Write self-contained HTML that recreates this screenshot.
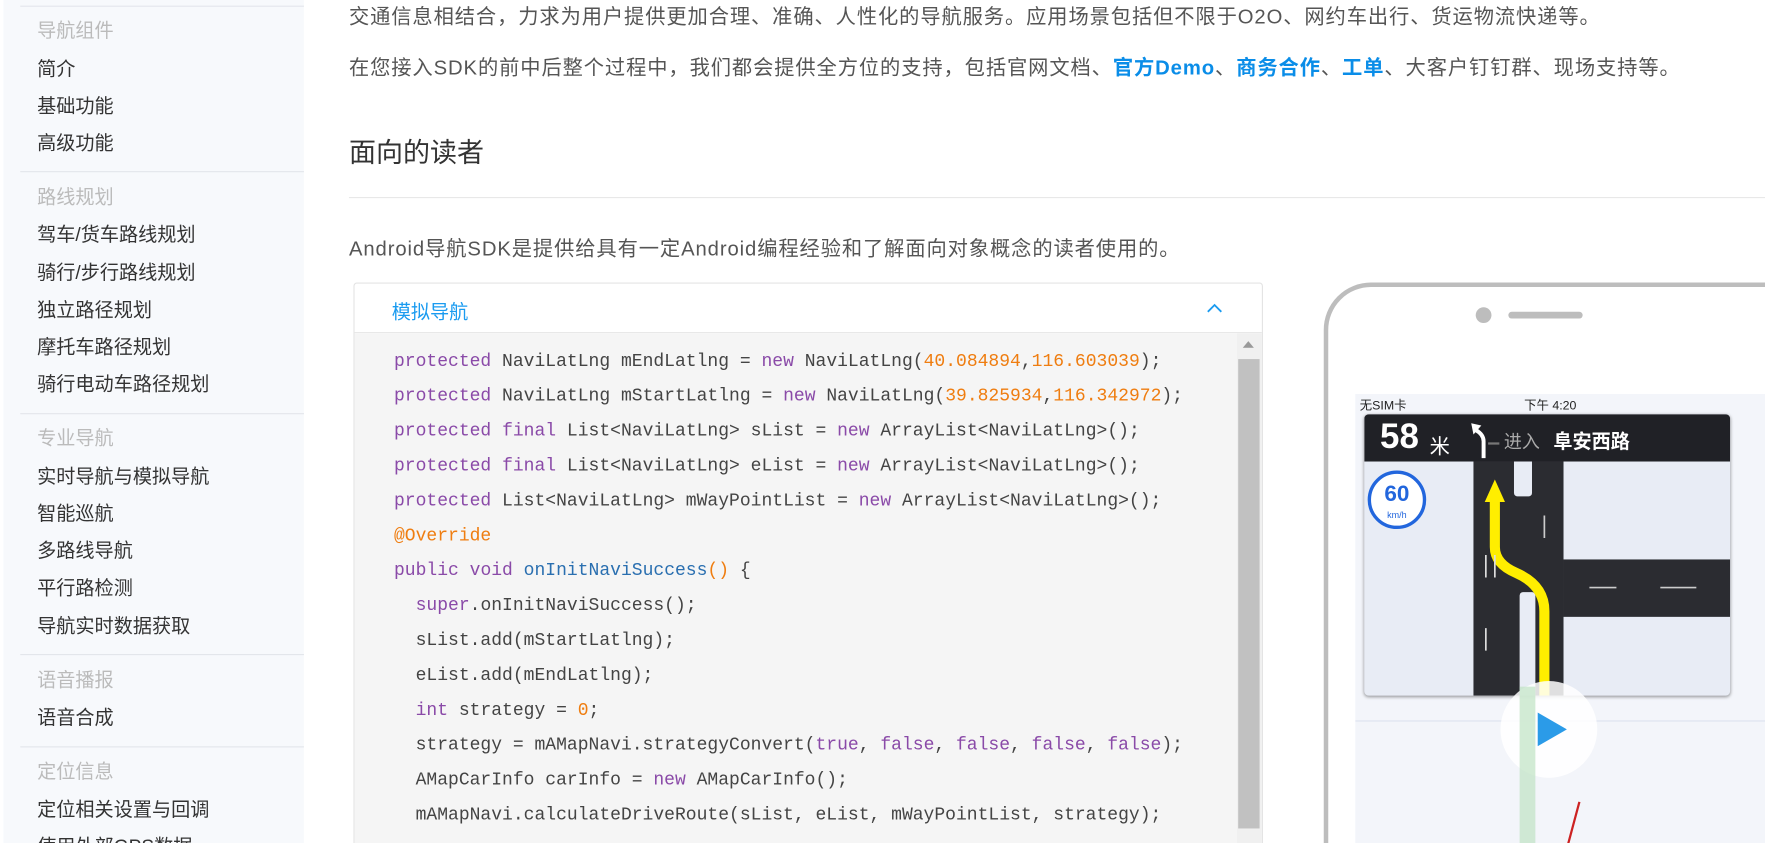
<!DOCTYPE html>
<html><head><meta charset="utf-8"><style>
*{margin:0;padding:0;box-sizing:border-box}
body{width:1765px;height:843px;overflow:hidden;background:#fff;font-family:"Liberation Sans","Noto Sans CJK SC",sans-serif;position:relative}
.wrap{position:absolute;left:0;top:0;width:1568px;height:749px;transform:scale(1.12564);transform-origin:0 0;overflow:hidden}
.side{position:absolute;left:3px;top:0;width:267px;height:843px;background:#f7f9fc}
.side div{position:absolute;left:30px;font-size:17px;color:#333;white-space:nowrap;line-height:20px}
.side div.h{color:#bbb}
.side hr{position:absolute;left:15px;border:0;border-top:1px solid #e3e6eb;width:252px}
.t{position:absolute;left:310px;font-size:18px;letter-spacing:0.8px;color:#555;white-space:nowrap;line-height:20px}
.t b{color:#0a8de8}
.code{position:absolute;left:314px;top:251px;width:808px;height:600px;border:1px solid #e4e4e4;border-radius:3px;background:#fff}
.code .hd{height:44px;border-bottom:1px solid #e6e6e6;color:#1a9bf0;font-size:17px;padding:11px 0 0 33px}
.code .bd{position:absolute;top:44px;left:0;right:0;bottom:0;background:#f5f5f5}
.ln{position:absolute;left:35px;font-family:"Liberation Mono",monospace;font-size:16px;color:#444;white-space:pre;line-height:20px}
.k{color:#8a4aa8}.n{color:#ef7d10}.m{color:#2a6fb0}
</style></head><body><div class="wrap">
<div class="side">
<hr style="top:5px">
<div class="h" style="top:18px">导航组件</div>
<div style="top:52px">简介</div>
<div style="top:85px">基础功能</div>
<div style="top:118px">高级功能</div>
<hr style="top:152px">
<div class="h" style="top:166px">路线规划</div>
<div style="top:199px">驾车/货车路线规划</div>
<div style="top:233px">骑行/步行路线规划</div>
<div style="top:266px">独立路径规划</div>
<div style="top:299px">摩托车路径规划</div>
<div style="top:332px">骑行电动车路径规划</div>
<hr style="top:367px">
<div class="h" style="top:380px">专业导航</div>
<div style="top:414px">实时导航与模拟导航</div>
<div style="top:447px">智能巡航</div>
<div style="top:480px">多路线导航</div>
<div style="top:513px">平行路检测</div>
<div style="top:547px">导航实时数据获取</div>
<hr style="top:581px">
<div class="h" style="top:595px">语音播报</div>
<div style="top:628px">语音合成</div>
<hr style="top:663px">
<div class="h" style="top:676px">定位信息</div>
<div style="top:710px">定位相关设置与回调</div>
<div style="top:743px">使用外部GPS数据</div>
</div>

<div class="t" style="top:5px">交通信息相结合，力求为用户提供更加合理、准确、人性化的导航服务。应用场景包括但不限于O2O、网约车出行、货运物流快递等。</div>
<div class="t" style="top:50px">在您接入SDK的前中后整个过程中，我们都会提供全方位的支持，包括官网文档、<b>官方Demo</b>、<b>商务合作</b>、<b>工单</b>、大客户钉钉群、现场支持等。</div>
<div class="t" style="top:123px;font-size:24px;letter-spacing:0;color:#333;line-height:28px">面向的读者</div>
<div style="position:absolute;left:310px;top:175px;width:1455px;border-top:1px solid #e8e8e8"></div>
<div class="t" style="top:211px">Android导航SDK是提供给具有一定Android编程经验和了解面向对象概念的读者使用的。</div>

<div class="code">
<div class="hd">模拟导航</div>
<svg style="position:absolute;left:757px;top:17px" width="14" height="10"><path d="M1 8 L7 2 L13 8" stroke="#1a9bf0" stroke-width="1.6" fill="none"/></svg>
<div class="bd">
<div style="position:absolute;right:0;top:0;width:22px;bottom:0;background:#f0f0f0"></div>
<svg style="position:absolute;right:7px;top:7px" width="10" height="6"><path d="M0 6L5 0L10 6Z" fill="#999"/></svg>
<div style="position:absolute;right:2px;top:23px;width:19px;height:417px;background:#c1c1c1"></div>
<div class="ln" style="top:15px"><span class="k">protected</span> NaviLatLng mEndLatlng = <span class="k">new</span> NaviLatLng(<span class="n">40.084894</span>,<span class="n">116.603039</span>);</div>
<div class="ln" style="top:46px"><span class="k">protected</span> NaviLatLng mStartLatlng = <span class="k">new</span> NaviLatLng(<span class="n">39.825934</span>,<span class="n">116.342972</span>);</div>
<div class="ln" style="top:77px"><span class="k">protected</span> <span class="k">final</span> List&lt;NaviLatLng&gt; sList = <span class="k">new</span> ArrayList&lt;NaviLatLng&gt;();</div>
<div class="ln" style="top:108px"><span class="k">protected</span> <span class="k">final</span> List&lt;NaviLatLng&gt; eList = <span class="k">new</span> ArrayList&lt;NaviLatLng&gt;();</div>
<div class="ln" style="top:139px"><span class="k">protected</span> List&lt;NaviLatLng&gt; mWayPointList = <span class="k">new</span> ArrayList&lt;NaviLatLng&gt;();</div>
<div class="ln" style="top:170px"><span class="n">@Override</span></div>
<div class="ln" style="top:201px"><span class="k">public</span> <span class="k">void</span> <span class="m">onInitNaviSuccess</span><span class="n">()</span> {</div>
<div class="ln" style="top:232px">  <span class="k">super</span>.onInitNaviSuccess();</div>
<div class="ln" style="top:263px">  sList.add(mStartLatlng);</div>
<div class="ln" style="top:294px">  eList.add(mEndLatlng);</div>
<div class="ln" style="top:325px">  <span class="k">int</span> strategy = <span class="n">0</span>;</div>
<div class="ln" style="top:356px">  strategy = mAMapNavi.strategyConvert(<span class="k">true</span>, <span class="k">false</span>, <span class="k">false</span>, <span class="k">false</span>, <span class="k">false</span>);</div>
<div class="ln" style="top:387px">  AMapCarInfo carInfo = <span class="k">new</span> AMapCarInfo();</div>
<div class="ln" style="top:418px">  mAMapNavi.calculateDriveRoute(sList, eList, mWayPointList, strategy);</div>
</div>
</div>

<!-- phone -->
<div style="position:absolute;left:1176px;top:251px;width:700px;height:700px;border:4px solid #bdbdbd;border-radius:42px;background:#fff"></div>
<div style="position:absolute;left:1311px;top:273px;width:14px;height:14px;border-radius:50%;background:#bdbdbd"></div>
<div style="position:absolute;left:1340px;top:277px;width:66px;height:6px;border-radius:3px;background:#bdbdbd"></div>
<div style="position:absolute;left:1204px;top:350px;width:380px;height:500px;background:#f3f5fa;overflow:hidden">
 <div style="position:absolute;left:4px;top:2px;font-size:11px;color:#222">无SIM卡</div>
 <div style="position:absolute;left:150px;top:2px;font-size:11px;color:#222">下午 4:20</div>
 <div style="position:absolute;left:180px;top:360px;width:2px;height:140px;background:#c22;transform:rotate(15deg)"></div>
 <div style="position:absolute;left:0;top:290px;width:380px;height:1px;background:#dde3ef"></div>
</div>
<div style="position:absolute;left:1212px;top:368px;width:325px;height:250px;border-radius:4px;background:#e8ecf5;overflow:hidden;box-shadow:0 1px 3px rgba(0,0,0,.4)">
 <div style="position:absolute;left:0;top:0;width:325px;height:42px;background:#202126"></div>
 <div style="position:absolute;left:14px;top:2px;font-size:31px;color:#fff;font-weight:bold">58</div>
 <div style="position:absolute;left:58px;top:15px;font-size:18px;color:#fff">米</div>
 <svg style="position:absolute;left:94px;top:6px" width="28" height="34"><path d="M12 33 V18 Q12 12 5 8" stroke="#fff" stroke-width="3.5" fill="none"/><path d="M1 2 L10 4 L3 12Z" fill="#fff"/><path d="M16 20 H26" stroke="#777" stroke-width="2"/></svg>
 <div style="position:absolute;left:124px;top:11px;font-size:16px;color:#aaa">进入</div>
 <div style="position:absolute;left:168px;top:10px;font-size:17px;color:#fff;font-weight:bold">阜安西路</div>
 <div style="position:absolute;left:97px;top:42px;width:80px;height:208px;background:#2b2c31"></div>
 <div style="position:absolute;left:177px;top:129px;width:148px;height:51px;background:#2b2c31"></div>
 <div style="position:absolute;left:133px;top:42px;width:16px;height:31px;background:#e8ecf5;border-radius:0 0 3px 3px"></div>
 <div style="position:absolute;left:138px;top:158px;width:14px;height:92px;background:#e8ecf5;border-radius:3px 3px 0 0"></div>
 <svg style="position:absolute;left:0;top:0" width="325" height="250"><path d="M116 75 V118 Q116 133 135 141 Q160 152 160 175 V250" stroke="#ffee00" stroke-width="9" fill="none"/><path d="M107 78 L116 58 L125 78Z" fill="#ffee00"/><path d="M160 110 V90 M200 154 H224 M263 154 H295" stroke="#ccc" stroke-width="1.5"/><path d="M108 210 V190 M108 125 V145 M116 125 V145" stroke="#ddd" stroke-width="1.5"/></svg>
 <div style="position:absolute;left:3px;top:50px;width:52px;height:52px;border:3px solid #2266dd;border-radius:50%;background:#fff;text-align:center;color:#2266dd;font-weight:bold;font-size:20px;line-height:30px;padding-top:3px">60<div style="font-size:8px;font-weight:normal;line-height:8px">km/h</div></div>
</div>
<div style="position:absolute;left:1333px;top:605px;width:86px;height:86px;border-radius:50%;background:rgba(255,255,255,.85)"></div>
<svg style="position:absolute;left:1366px;top:633px" width="26" height="30"><path d="M0 0 L26 15 L0 30Z" fill="#2b9be8"/></svg>
<div style="position:absolute;left:1350px;top:610px;width:14px;height:140px;background:#bfe3c3;opacity:.7"></div>
</div></body></html>
